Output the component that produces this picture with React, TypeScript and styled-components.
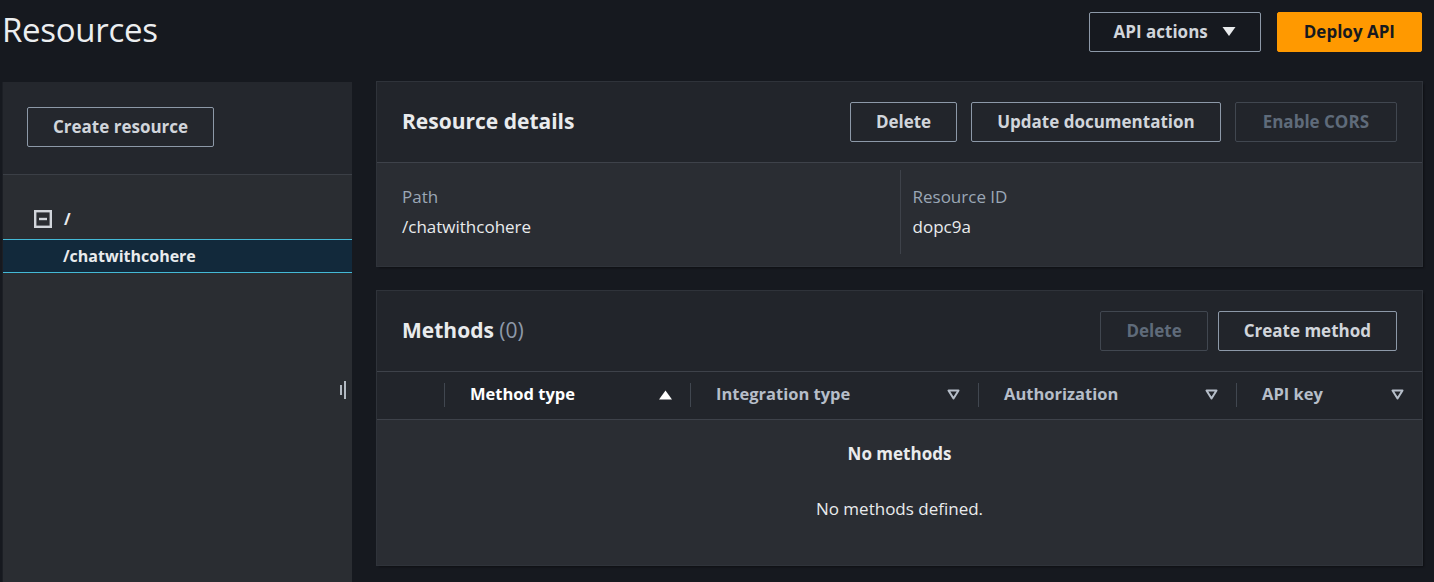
import React from "react";
import styled, { createGlobalStyle, css } from "styled-components";

const GlobalStyle = createGlobalStyle`
  html, body {
    margin: 0;
    padding: 0;
    background: #16191f;
    height: 100%;
    overflow: hidden;
  }
  body {
    font-family: "Open Sans", "Noto Sans", sans-serif;
    color: #d1d5db;
  }
`;

const Page = styled.div`
  display: flex;
  flex-direction: column;
  height: 582px;
  padding: 12px 12px 0 2px;
  box-sizing: border-box;
  gap: 30px;
`;

const TopBar = styled.header`
  display: flex;
  align-items: center;
  justify-content: space-between;
  height: 40px;
`;

const PageTitle = styled.h1`
  margin: 0 0 5px 0;
  font-size: 33px;
  font-weight: 400;
  color: #eceef0;
  letter-spacing: -0.3px;
`;

const ButtonRow = styled.div<{ $gap?: number }>`
  display: flex;
  gap: ${(p) => p.$gap ?? 14}px;
  align-items: center;
`;

const Button = styled.button<{
  $variant?: "normal" | "primary" | "disabled";
  $pad?: number;
}>`
  display: inline-flex;
  align-items: center;
  justify-content: center;
  gap: 14px;
  height: 40px;
  padding: 0 ${(p) => p.$pad ?? 25}px 2px;
  box-sizing: border-box;
  border-radius: 2px;
  font-family: inherit;
  font-size: 17px;
  font-weight: 700;
  background: transparent;
  border: 1px solid #8d99a8;
  color: #d1d5db;
  ${(p) =>
    p.$variant === "primary" &&
    css`
      background: #ff9900;
      border-color: #ff9900;
      color: #16191f;
    `}
  ${(p) =>
    p.$variant === "disabled" &&
    css`
      border-color: #414750;
      color: #5f6b7a;
    `}
`;

const Main = styled.main`
  flex: 1;
  display: grid;
  grid-template-columns: 350px 1fr;
  gap: 25px;
  min-height: 0;
`;

const SidePanel = styled.aside`
  position: relative;
  display: flex;
  flex-direction: column;
  background: #2a2d32;
  border-left: 1px solid #1c1f25;
`;

const SideHeader = styled.div`
  padding: 25px 24px 27px;
  background: #24272d;
  border-bottom: 1px solid #3b3f46;
`;

const Tree = styled.ul`
  list-style: none;
  margin: 0;
  padding: 26px 0 0;
`;

const TreeRow = styled.li<{ $selected?: boolean }>`
  display: flex;
  align-items: center;
  gap: 12px;
  height: 36px;
  padding-left: ${(p) => (p.$selected ? 60 : 31)}px;
  font-size: 16px;
  font-weight: 700;
  color: #e9ebed;
  ${(p) =>
    p.$selected &&
    css`
      height: 32px;
      margin-top: 2px;
      background: #12293b;
      border-top: 1px solid #44b9d6;
      border-bottom: 1px solid #44b9d6;
    `}
`;

const Handle = styled.div`
  position: absolute;
  right: 6px;
  top: 299px;
  display: flex;
  gap: 2px;
  align-items: center;
  span {
    display: block;
    width: 2px;
    background: #b3bac3;
  }
  span:first-child {
    height: 10px;
  }
  span:last-child {
    height: 18px;
  }
`;

const Column = styled.section`
  display: flex;
  flex-direction: column;
  gap: 25px;
`;

const Card = styled.div`
  background: #2a2d33;
  box-shadow: 0 0 0 1px #2f333a, 2px 2px 2px rgba(0, 0, 0, 0.4);
`;

const CardHeader = styled.div`
  display: flex;
  align-items: center;
  justify-content: space-between;
  height: 80px;
  padding: 0 25px;
  background: #22252b;
  border-bottom: 1px solid #3e424a;
`;

const CardTitle = styled.h2`
  margin: 0 0 3px;
  font-size: 21px;
  font-weight: 700;
  color: #e9ebed;
  span {
    font-weight: 400;
    color: #8d99a8;
  }
`;

const Details = styled.div`
  display: grid;
  grid-template-columns: 1fr 1fr;
  padding: 7px 0 12px;
`;

const DetailCol = styled.div<{ $divider?: boolean }>`
  padding: 12px 25px;
  line-height: 30px;
  font-size: 17px;
  ${(p) =>
    p.$divider &&
    css`
      padding-left: 12px;
      border-left: 1px solid #3e424a;
    `}
`;

const DetailLabel = styled.div`
  color: #9ba7b6;
`;

const DetailValue = styled.div`
  color: #e9ebed;
`;

const TableHead = styled.div`
  display: grid;
  grid-template-columns: 67px 246px 288px 258px 1fr;
  height: 47px;
  align-items: center;
  background: #22252b;
  border-bottom: 1px solid #3e424a;
`;

const HeadCell = styled.div<{ $active?: boolean }>`
  display: flex;
  align-items: center;
  justify-content: space-between;
  height: 24px;
  margin-top: -2px;
  padding: 0 18px 0 25px;
  font-size: 16.5px;
  font-weight: 700;
  color: ${(p) => (p.$active ? "#ffffff" : "#b6bec9")};
  border-left: 1px solid #414750;
`;

const HeadLabel = styled.span`
  margin-bottom: 2px;
`;

const Empty = styled.div`
  display: flex;
  flex-direction: column;
  align-items: center;
  padding: 22px 0 44px;
  font-size: 17px;
  color: #e9ebed;
  strong {
    line-height: 24px;
    margin-bottom: 31px;
  }
  p {
    margin: 0;
    line-height: 24px;
  }
`;

const Caret = () => (
  <svg width="14" height="11" viewBox="0 0 14 11">
    <path d="M0.5 1h13L7 10z" fill="#e9ebed" />
  </svg>
);

const SortUp = () => (
  <svg width="13" height="10" viewBox="0 0 13 10">
    <path d="M6.5 0.5L13 9.5H0z" fill="#ffffff" />
  </svg>
);

const SortDown = () => (
  <svg width="13" height="11" viewBox="0 0 13 11">
    <path d="M1.5 1.5h10L6.5 9.5z" fill="none" stroke="#b6bec9" strokeWidth="2" strokeLinejoin="round" />
  </svg>
);

const Collapse = () => (
  <svg width="18" height="18" viewBox="0 0 18 18">
    <rect x="1.2" y="1.2" width="15.6" height="15.6" fill="none" stroke="#d1d5db" strokeWidth="2.4" />
    <path d="M5 9h8" stroke="#d1d5db" strokeWidth="2.4" />
  </svg>
);

const columns = ["Method type", "Integration type", "Authorization", "API key"];

export default function App() {
  return (
    <>
      <GlobalStyle />
      <Page>
        <TopBar>
          <PageTitle>Resources</PageTitle>
          <ButtonRow $gap={16}>
            <Button $pad={24}>
              API actions <Caret />
            </Button>
            <Button $variant="primary" $pad={26}>
              Deploy API
            </Button>
          </ButtonRow>
        </TopBar>
        <Main>
          <SidePanel>
            <SideHeader>
              <Button>Create resource</Button>
            </SideHeader>
            <Tree>
              <TreeRow>
                <Collapse />/
              </TreeRow>
              <TreeRow $selected>/chatwithcohere</TreeRow>
            </Tree>
            <Handle>
              <span />
              <span />
            </Handle>
          </SidePanel>
          <Column>
            <Card>
              <CardHeader>
                <CardTitle>Resource details</CardTitle>
                <ButtonRow>
                  <Button>Delete</Button>
                  <Button>Update documentation</Button>
                  <Button $variant="disabled" $pad={27}>
                    Enable CORS
                  </Button>
                </ButtonRow>
              </CardHeader>
              <Details>
                <DetailCol>
                  <DetailLabel>Path</DetailLabel>
                  <DetailValue>/chatwithcohere</DetailValue>
                </DetailCol>
                <DetailCol $divider>
                  <DetailLabel>Resource ID</DetailLabel>
                  <DetailValue>dopc9a</DetailValue>
                </DetailCol>
              </Details>
            </Card>
            <Card>
              <CardHeader>
                <CardTitle>
                  Methods <span>(0)</span>
                </CardTitle>
                <ButtonRow $gap={10}>
                  <Button $variant="disabled">Delete</Button>
                  <Button>Create method</Button>
                </ButtonRow>
              </CardHeader>
              <TableHead>
                <div />
                {columns.map((c, i) => (
                  <HeadCell key={c} $active={i === 0}>
                    <HeadLabel>{c}</HeadLabel>
                    {i === 0 ? <SortUp /> : <SortDown />}
                  </HeadCell>
                ))}
              </TableHead>
              <Empty>
                <strong>No methods</strong>
                <p>No methods defined.</p>
              </Empty>
            </Card>
          </Column>
        </Main>
      </Page>
    </>
  );
}
